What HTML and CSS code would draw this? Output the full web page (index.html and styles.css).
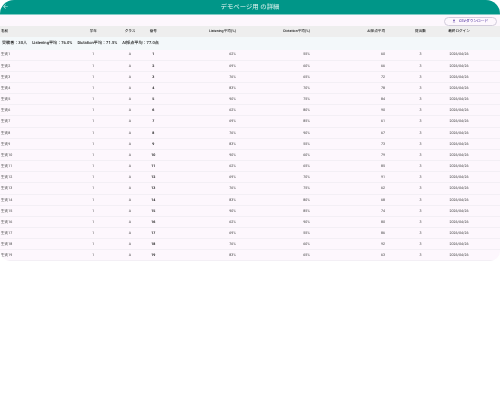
FILE: index.html
```html
<!DOCTYPE html>
<html lang="ja">
<head>
<meta charset="utf-8">
<title>デモページ用 の詳細</title>
<link rel="stylesheet" href="styles.css">
</head>
<body>
<div class="screen">
<header class="appbar">
<svg class="back" viewBox="0 0 24 24"><path d="M20 11H7.8l5.6-5.6L12 4l-8 8 8 8 1.4-1.4L7.8 13H20z"/></svg>
<h1 class="title">デモページ用 の詳細</h1>
</header>
<div class="toolbar">
<button class="csv"><svg class="dl" viewBox="0 0 24 24"><path d="M19 9h-4V3H9v6H5l7 7zM5 18v2h14v-2z"/></svg>CSVダウンロード</button>
</div>
<table class="grid">
<colgroup><col class="c-name"><col class="c-year"><col class="c-class"><col class="c-no"><col class="c-l"><col class="c-d"><col class="c-ai"><col class="c-sub"><col class="c-date"></colgroup>
<thead><tr><th class="left">名前</th><th>学年</th><th>クラス</th><th>番号</th><th class="right">Listening平均(%)</th><th class="right">Dictation平均(%)</th><th class="right">AI採点平均</th><th class="sub">提出数</th><th class="date">最終ログイン</th></tr></thead>
<tbody>
<tr class="summary"><td colspan="9"><span>受験者：30人</span><span>Listening平均：76.0%</span><span>Dictation平均：71.5%</span><span>AI採点平均：77.0点</span></td></tr>
<tr><td class="left">生徒1</td><td>1</td><td>A</td><td class="no">1</td><td class="right">62%</td><td class="right">55%</td><td class="right">60</td><td class="sub">3</td><td class="date">2026/04/26</td></tr>
<tr><td class="left">生徒2</td><td>1</td><td>A</td><td class="no">2</td><td class="right">69%</td><td class="right">60%</td><td class="right">66</td><td class="sub">3</td><td class="date">2026/04/26</td></tr>
<tr><td class="left">生徒3</td><td>1</td><td>A</td><td class="no">3</td><td class="right">76%</td><td class="right">65%</td><td class="right">72</td><td class="sub">3</td><td class="date">2026/04/26</td></tr>
<tr><td class="left">生徒4</td><td>1</td><td>A</td><td class="no">4</td><td class="right">83%</td><td class="right">70%</td><td class="right">78</td><td class="sub">3</td><td class="date">2026/04/26</td></tr>
<tr><td class="left">生徒5</td><td>1</td><td>A</td><td class="no">5</td><td class="right">90%</td><td class="right">75%</td><td class="right">84</td><td class="sub">3</td><td class="date">2026/04/26</td></tr>
<tr><td class="left">生徒6</td><td>1</td><td>A</td><td class="no">6</td><td class="right">62%</td><td class="right">80%</td><td class="right">90</td><td class="sub">3</td><td class="date">2026/04/26</td></tr>
<tr><td class="left">生徒7</td><td>1</td><td>A</td><td class="no">7</td><td class="right">69%</td><td class="right">85%</td><td class="right">61</td><td class="sub">3</td><td class="date">2026/04/26</td></tr>
<tr><td class="left">生徒8</td><td>1</td><td>A</td><td class="no">8</td><td class="right">76%</td><td class="right">90%</td><td class="right">67</td><td class="sub">3</td><td class="date">2026/04/26</td></tr>
<tr><td class="left">生徒9</td><td>1</td><td>A</td><td class="no">9</td><td class="right">83%</td><td class="right">55%</td><td class="right">73</td><td class="sub">3</td><td class="date">2026/04/26</td></tr>
<tr><td class="left">生徒10</td><td>1</td><td>A</td><td class="no">10</td><td class="right">90%</td><td class="right">60%</td><td class="right">79</td><td class="sub">3</td><td class="date">2026/04/26</td></tr>
<tr><td class="left">生徒11</td><td>1</td><td>A</td><td class="no">11</td><td class="right">62%</td><td class="right">65%</td><td class="right">85</td><td class="sub">3</td><td class="date">2026/04/26</td></tr>
<tr><td class="left">生徒12</td><td>1</td><td>A</td><td class="no">12</td><td class="right">69%</td><td class="right">70%</td><td class="right">91</td><td class="sub">3</td><td class="date">2026/04/26</td></tr>
<tr><td class="left">生徒13</td><td>1</td><td>A</td><td class="no">13</td><td class="right">76%</td><td class="right">75%</td><td class="right">62</td><td class="sub">3</td><td class="date">2026/04/26</td></tr>
<tr><td class="left">生徒14</td><td>1</td><td>A</td><td class="no">14</td><td class="right">83%</td><td class="right">80%</td><td class="right">68</td><td class="sub">3</td><td class="date">2026/04/26</td></tr>
<tr><td class="left">生徒15</td><td>1</td><td>A</td><td class="no">15</td><td class="right">90%</td><td class="right">85%</td><td class="right">74</td><td class="sub">3</td><td class="date">2026/04/26</td></tr>
<tr><td class="left">生徒16</td><td>1</td><td>A</td><td class="no">16</td><td class="right">62%</td><td class="right">90%</td><td class="right">80</td><td class="sub">3</td><td class="date">2026/04/26</td></tr>
<tr><td class="left">生徒17</td><td>1</td><td>A</td><td class="no">17</td><td class="right">69%</td><td class="right">55%</td><td class="right">86</td><td class="sub">3</td><td class="date">2026/04/26</td></tr>
<tr><td class="left">生徒18</td><td>1</td><td>A</td><td class="no">18</td><td class="right">76%</td><td class="right">60%</td><td class="right">92</td><td class="sub">3</td><td class="date">2026/04/26</td></tr>
<tr><td class="left">生徒19</td><td>1</td><td>A</td><td class="no">19</td><td class="right">83%</td><td class="right">65%</td><td class="right">63</td><td class="sub">3</td><td class="date">2026/04/26</td></tr>
</tbody>
</table>
</div>
</body>
</html>
```
FILE: styles.css
```css
html, body { margin: 0; padding: 0; background: #fff; }
body { width: 500px; height: 400px; overflow: hidden; font-family: Roboto, "Noto Sans CJK JP", sans-serif; text-rendering: geometricPrecision; }
.screen { width: 500px; background: #fdf7fd; border-radius: 14px 14px 10px 10px; overflow: hidden; filter: blur(0.2px); }
.appbar { height: 14px; background: #009688; border-bottom: 1px solid #80cbc4; display: flex; align-items: center; justify-content: center; position: relative; }
.back { position: absolute; left: 2px; top: 3px; width: 7px; height: 7px; fill: #cfeeea; }
.title { margin: 0; font-size: 6.4px; font-weight: 400; color: #e4f5f2; line-height: 14px; }
.toolbar { height: 11px; display: flex; justify-content: flex-end; align-items: flex-end; padding-right: 3.5px; }
.csv { height: 9.5px; width: 52.5px; padding: 0; box-sizing: border-box; border: 1px solid #d3cddc; border-radius: 5px; background: #fdf7fd; color: #5f43a8; font: 500 3.7px Roboto, "Noto Sans CJK JP", sans-serif; text-rendering: geometricPrecision; display: flex; align-items: center; justify-content: center; gap: 2.5px; }
.dl { width: 4px; height: 4px; fill: #5f43a8; }
.grid { width: 500px; table-layout: fixed; border-collapse: separate; border-spacing: 0; font-size: 3.6px; line-height: 5px; color: #444; }
.c-name { width: 75px; } .c-year { width: 36.5px; } .c-class { width: 37px; } .c-no { width: 9.5px; }
.c-l { width: 78px; } .c-d { width: 74px; } .c-ai { width: 75px; } .c-sub { width: 55px; } .c-date { width: 60px; }
th { height: 10.5px; background: #eeeeee; font-weight: 500; color: #222; text-align: center; padding: 0; box-sizing: border-box; }
td { height: 11.17px; text-align: center; padding: 0.8px 0 0; box-sizing: border-box; border-bottom: 1px solid #f3eff5; }
td.left { text-align: left; padding-left: 1px; }
th.left { text-align: left; padding-left: 1px; }
.right, td.right { text-align: right; }
td.sub, th.sub { padding-left: 16px; }
td.date, th.date { padding-right: 22px; }
.no { font-weight: 700; color: #222; }
.summary td { height: 13px; background: #f3f8fa; border-bottom: 0; text-align: left; padding: 0 0 0 2px; font-weight: 500; color: #222; font-size: 4.1px; }
.summary span { margin-right: 5px; }
```
